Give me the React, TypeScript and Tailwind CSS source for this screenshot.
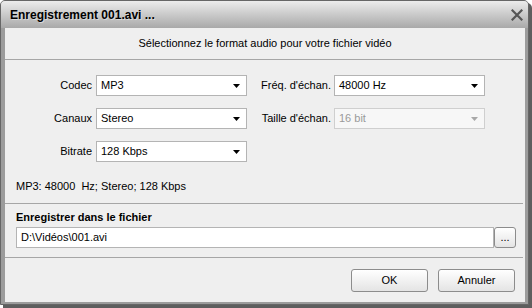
import React from 'react';

const font = { fontFamily: '"Liberation Sans", Arial, sans-serif' };

const Arrow: React.FC<{ disabled?: boolean }> = ({ disabled }) => (
  <svg width="7" height="4" viewBox="0 0 7 4" className="shrink-0">
    <path d="M0 0 H7 L3.5 4 Z" fill={disabled ? '#a8a8a8' : '#000'} />
  </svg>
);

interface ComboProps {
  value: string;
  disabled?: boolean;
}

const Combo: React.FC<ComboProps> = ({ value, disabled }) => (
  <div
    className={`w-[151px] h-[21px] flex items-center justify-between pl-[4px] pr-[6px] border ${
      disabled ? 'bg-[#f7f7f7] border-[#cfcfcf] text-[#9a9a9a]' : 'bg-white border-[#b4b4b4] text-black'
    }`}
  >
    <span>{value}</span>
    <Arrow disabled={disabled} />
  </div>
);

const Field: React.FC<{ label: string; width: string; children: React.ReactNode; gap: string }> = ({
  label,
  width,
  children,
  gap,
}) => (
  <>
    <div className={`${width} ${gap} text-right whitespace-nowrap`}>{label}</div>
    {children}
  </>
);

const Button: React.FC<{ children: React.ReactNode; className?: string }> = ({ children, className = '' }) => (
  <div
    className={`flex items-center justify-center border border-[#8c8c8c] rounded-[3px] bg-gradient-to-b from-white to-[#e4e4e4] text-black ${className}`}
  >
    {children}
  </div>
);

export default function App() {
  return (
    <div className="w-[532px] h-[308px] bg-white text-[11px] leading-[13px] text-black" style={font}>
      <div className="w-[529px] h-[305px] flex flex-col border border-[#666666] rounded-t-[5px] bg-[#9c9c9c] shadow-[3px_3px_0_#5e5e5e]">
        {/* title bar */}
        <div className="h-[27px] shrink-0 flex items-center justify-between pl-[9px] pr-[5px] pt-[1px] rounded-t-[4px] bg-gradient-to-b from-[#ececec] to-[#a9a9a9]">
          <span className="font-bold text-[12px] [text-shadow:1px_1px_0_#d8d8d8]">Enregistrement 001.avi ...</span>
          <svg width="12" height="12" viewBox="0 0 12 12">
            <path d="M1.5 1.5 L10.5 10.5 M10.5 1.5 L1.5 10.5" stroke="#555" strokeWidth="2.2" strokeLinecap="square" />
          </svg>
        </div>

        {/* client */}
        <div className="flex-1 ml-[4px] mr-[3px] mb-[2px] bg-[#efefef] flex flex-col">
          <div className="h-[31px] flex items-center justify-center">
            Sélectionnez le format audio pour votre fichier vidéo
          </div>
          <div className="h-px bg-[#a6a6a6] mr-[2px]" />

          <div className="pt-[15px] flex flex-col gap-[12px]">
            <div className="flex items-center">
              <Field label="Codec" width="w-[87px]" gap="mr-[4px]">
                <Combo value="MP3" />
              </Field>
              <Field label="Fréq. d'échan." width="w-[84px]" gap="mr-[3px]">
                <Combo value="48000 Hz" />
              </Field>
            </div>
            <div className="flex items-center">
              <Field label="Canaux" width="w-[87px]" gap="mr-[4px]">
                <Combo value="Stereo" />
              </Field>
              <Field label="Taille d'échan." width="w-[84px]" gap="mr-[3px]">
                <Combo value="16 bit" disabled />
              </Field>
            </div>
            <div className="flex items-center">
              <Field label="Bitrate" width="w-[87px]" gap="mr-[4px]">
                <Combo value="128 Kbps" />
              </Field>
            </div>
          </div>

          <div className="mt-[18px] pl-[11px] whitespace-pre">MP3: 48000  Hz; Stereo; 128 Kbps</div>

          <div className="mt-[10px] h-px bg-[#a6a6a6] mr-[2px]" />

          <div className="mt-[7px] pl-[11px] font-bold">Enregistrer dans le fichier</div>
          <div className="mt-[3px] pl-[11px] pr-[9px] flex">
            <div className="flex-1 h-[21px] flex items-center pl-[4px] bg-white border border-[#b4b4b4]">
              D:\Vidéos\001.avi
            </div>
            <Button className="w-[22px] h-[21px] rounded-[2px]">...</Button>
          </div>

          <div className="mt-[9px] h-px bg-[#a6a6a6] mr-[2px]" />

          <div className="mt-[11px] flex justify-end gap-[10px] pr-[10px]">
            <Button className="w-[77px] h-[23px]">OK</Button>
            <Button className="w-[77px] h-[23px]">Annuler</Button>
          </div>
        </div>
      </div>
    </div>
  );
}
